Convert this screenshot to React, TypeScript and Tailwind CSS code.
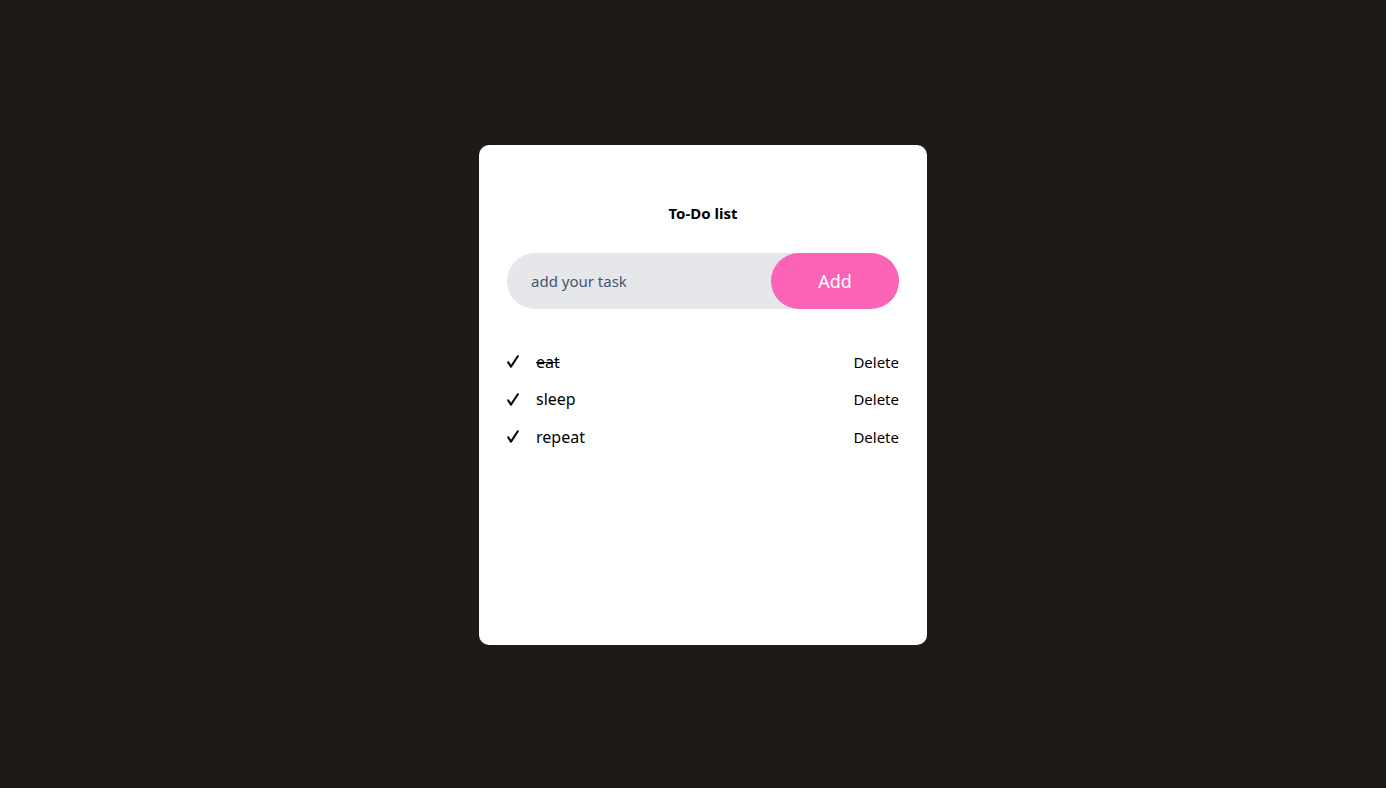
import { useState } from "react";

interface Task {
  id: number;
  text: string;
  done: boolean;
}

export default function App() {
  const [tasks, setTasks] = useState<Task[]>([
    { id: 1, text: "eat", done: true },
    { id: 2, text: "sleep", done: false },
    { id: 3, text: "repeat", done: false },
  ]);
  const [value, setValue] = useState("");

  function add() {
    if (!value.trim()) return;
    setTasks([...tasks, { id: Date.now(), text: value.trim(), done: false }]);
    setValue("");
  }

  return (
    <div
      className="min-h-screen w-full bg-[#1e1a17] flex items-center justify-center pl-5 pt-[2px]"
      style={{ fontFamily: '"Noto Sans", "Open Sans", sans-serif' }}
    >
      <div className="w-[448px] h-[500px] bg-white rounded-[10px] px-7 pt-[58px]">
        <h1 className="text-center text-[15px] font-bold text-black leading-5">To-Do list</h1>

        <div className="mt-[30px] flex h-14 rounded-full bg-gray-200">
          <input
            value={value}
            onChange={(e) => setValue(e.target.value)}
            placeholder="add your task"
            className="flex-1 min-w-0 bg-transparent pl-6 text-[15px] text-slate-700 placeholder:text-slate-600 outline-none"
          />
          <button
            onClick={add}
            className="w-32 rounded-full bg-[#fb64b6] text-white text-lg"
          >
            Add
          </button>
        </div>

        <ul className="mt-[34px]">
          {tasks.map((t) => (
            <li key={t.id} className="flex items-center h-[37.5px]">
              <button
                onClick={() => setTasks(tasks.map((x) => (x.id === t.id ? { ...x, done: !x.done } : x)))}
                className="w-[29px] shrink-0"
              >
                <svg width="12" height="13" viewBox="0 0 12 13" fill="none" stroke="black" strokeWidth="2" strokeLinecap="round" strokeLinejoin="round">
                  <path d="M1.2 7.4 L4 11.6 L10.8 1.2" />
                </svg>
              </button>
              <span className={`flex-1 text-base text-black ${t.done ? "line-through" : ""}`}>{t.text}</span>
              <button
                onClick={() => setTasks(tasks.filter((x) => x.id !== t.id))}
                className="text-[15px] text-black"
              >
                Delete
              </button>
            </li>
          ))}
        </ul>
      </div>
    </div>
  );
}
